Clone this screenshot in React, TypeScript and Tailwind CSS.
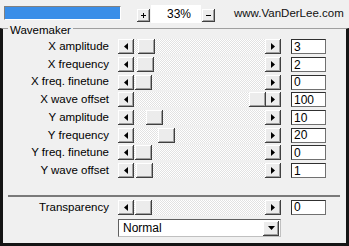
import React from 'react';

const rows = [
  { label: 'X amplitude', value: 3 },
  { label: 'X frequency', value: 2 },
  { label: 'X freq. finetune', value: 0 },
  { label: 'X wave offset', value: 100 },
  { label: 'Y amplitude', value: 10 },
  { label: 'Y frequency', value: 20 },
  { label: 'Y freq. finetune', value: 0 },
  { label: 'Y wave offset', value: 1 },
];

const raised =
  'bg-[#ececec] shadow-[inset_-1px_-1px_#404040,inset_1px_1px_#ffffff,inset_-2px_-2px_#a0a0a0]';

function Arrow({ dir }: { dir: 'left' | 'right' | 'down' }) {
  if (dir === 'down') {
    return (
      <svg width="7" height="4" viewBox="0 0 7 4">
        <path d="M0 0h7L3.5 4z" fill="#000" />
      </svg>
    );
  }
  return (
    <svg width="4" height="7" viewBox="0 0 4 7">
      <path d={dir === 'left' ? 'M4 0v7L0 3.5z' : 'M0 0v7l4-3.5z'} fill="#000" />
    </svg>
  );
}

function ScrollBar({ value }: { value: number }) {
  const left = Math.round((value / 100) * 114);
  return (
    <div className="flex h-[15px] w-[163px]">
      <div className={`flex h-full w-[16px] items-center justify-center ${raised}`}>
        <Arrow dir="left" />
      </div>
      <div className="relative h-full flex-1 bg-[repeating-conic-gradient(#ffffff_0_25%,#e2e2e2_0_50%)] bg-[length:2px_2px]">
        <div className={`absolute top-0 h-full w-[17px] ${raised}`} style={{ left: left + 1 }} />
      </div>
      <div className={`flex h-full w-[16px] items-center justify-center ${raised}`}>
        <Arrow dir="right" />
      </div>
    </div>
  );
}

function NumBox({ value }: { value: number }) {
  return (
    <div className="ml-[10px] flex h-[15px] w-[35px] items-center border-t border-l border-t-[#303030] border-l-[#303030] border-r border-b border-r-[#707070] border-b-[#707070] bg-white pl-[2px] text-[12px] leading-none">
      {value}
    </div>
  );
}

function Row({ label, value }: { label: string; value: number }) {
  return (
    <div className="flex h-[17.7px] items-center">
      <div className="w-[106px] text-right text-[11.5px] leading-none">{label}</div>
      <div className="ml-[9px]">
        <ScrollBar value={value} />
      </div>
      <NumBox value={value} />
    </div>
  );
}

export default function App() {
  return (
    <div
      className="relative h-[246px] w-[349px] overflow-hidden bg-[#f0f0f0] text-black"
      style={{ fontFamily: '"Liberation Sans", Arial, sans-serif' }}
    >
      {/* toolbar */}
      <div className="flex h-[28px] items-start">
        <div className="ml-[4px] mt-[6px] h-[14px] w-[117px] border-t border-l border-t-[#808080] border-l-[#808080] border-r border-b border-r-white border-b-white bg-[#3a8ee8]" />
        <div className={`ml-[16px] mt-[9px] flex h-[13px] w-[13px] items-center justify-center ${raised}`}>
          <svg width="5" height="5" viewBox="0 0 5 5">
            <path d="M2 0h1v5H2zM0 2h5v1H0z" fill="#000" />
          </svg>
        </div>
        <div className="ml-[1px] mt-[5px] flex h-[18px] w-[50px] items-center bg-white pl-[16px] text-[12px] leading-none">
          33%
        </div>
        <div className={`ml-[1px] mt-[9px] flex h-[13px] w-[13px] items-center justify-center ${raised}`}>
          <svg width="5" height="1" viewBox="0 0 5 1">
            <path d="M0 0h5v1H0z" fill="#000" />
          </svg>
        </div>
        <div className="ml-[19px] mt-[8px] text-[11.5px] leading-none text-[#111]">www.VanDerLee.com</div>
      </div>

      {/* group box */}
      <div className="relative h-[218px] border-t border-t-[#a0a0a0] border-x-[3px] border-b-[3px] border-x-[#151515] border-b-[#151515]">
        <div className="absolute left-[5px] top-[-4px] bg-[#f0f0f0] px-[2px] text-[11.5px] leading-none">Wavemaker</div>
        <div className="flex flex-col pt-[9px]">
          {rows.map((r) => (
            <Row key={r.label} label={r.label} value={r.value} />
          ))}
        </div>
        <div className="ml-[5px] mr-[6px] mt-[15px] h-[2px] bg-[#7a7a7a]" />
        <div className="mt-[2px]">
          <Row label="Transparency" value={0} />
        </div>
        <div className="ml-[115px] mt-[3px] flex h-[18px] w-[163px] items-center border-t border-l border-t-[#606060] border-l-[#606060] border-r border-b border-r-[#c0c0c0] border-b-[#c0c0c0] bg-white pl-[4px] pr-[1px]">
          <span className="flex-1 text-[12px] leading-none">Normal</span>
          <div className={`flex h-[15px] w-[16px] items-center justify-center ${raised}`}>
            <Arrow dir="down" />
          </div>
        </div>
      </div>
    </div>
  );
}
